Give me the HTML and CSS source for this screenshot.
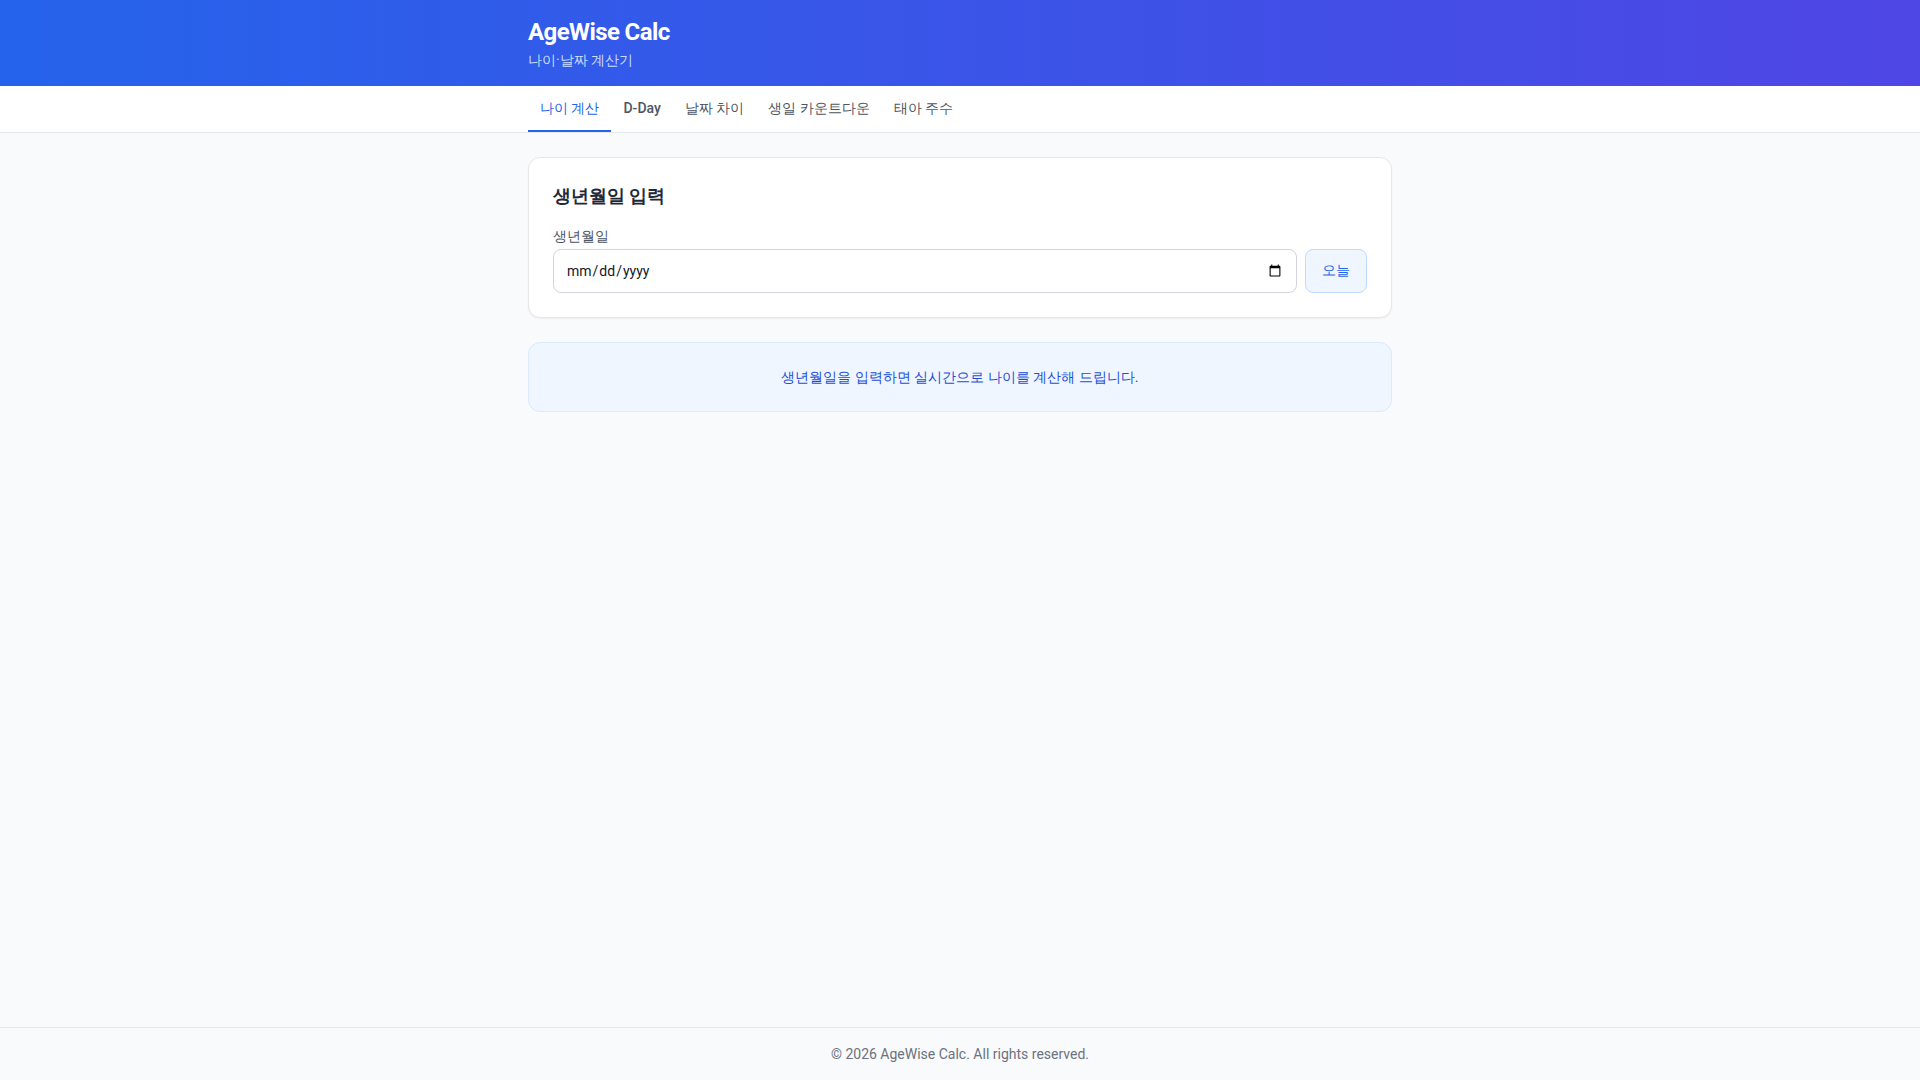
FILE: index.html
```html
<!DOCTYPE html>
<html lang="ko">
<head>
<meta charset="utf-8">
<title>AgeWise Calc</title>
<link rel="stylesheet" href="styles.css">
</head>
<body>
<header class="site-header">
  <div class="container">
    <h1 class="brand">AgeWise Calc</h1>
    <p class="tagline">나이·날짜 계산기</p>
  </div>
</header>
<nav class="tabs-bar">
  <div class="container tabs">
    <a class="tab active" href="#">나이 계산</a>
    <a class="tab" href="#">D-Day</a>
    <a class="tab" href="#">날짜 차이</a>
    <a class="tab" href="#">생일 카운트다운</a>
    <a class="tab" href="#">태아 주수</a>
  </div>
</nav>
<main class="main">
  <div class="container stack">
    <section class="card">
      <h2 class="card-title">생년월일 입력</h2>
      <label class="field-label" for="birth">생년월일</label>
      <div class="field-row">
        <input id="birth" class="date-input" type="date">
        <button class="today-btn" type="button">오늘</button>
      </div>
    </section>
    <section class="info">
      생년월일을 입력하면 실시간으로 나이를 계산해 드립니다.
    </section>
  </div>
</main>
<footer class="site-footer">
  © 2026 AgeWise Calc. All rights reserved.
</footer>
</body>
</html>
```
FILE: styles.css
```css
* { box-sizing: border-box; }
html, body { margin: 0; padding: 0; }
body {
  font-family: Roboto, sans-serif;
  background: #f9fafb;
  color: #111827;
  min-height: 100vh;
  display: flex;
  flex-direction: column;
}
.container {
  width: 864px;
  margin: 0 auto;
}
.site-header {
  background: linear-gradient(90deg, #2563eb 0%, #4f46e5 100%);
  color: #fff;
  padding: 16px 0;
}
.brand {
  margin: 0;
  font-size: 24px;
  line-height: 32px;
  font-weight: 700;
  letter-spacing: -0.025em;
}
.tagline {
  margin: 2px 0 0;
  font-size: 14px;
  line-height: 20px;
  color: rgba(219, 234, 254, 0.92);
}
.tabs-bar {
  background: #fff;
  border-bottom: 1px solid #e5e7eb;
}
.tabs {
  display: flex;
}
.tab {
  display: block;
  padding: 12px 12px;
  font-size: 14px;
  line-height: 20px;
  font-weight: 500;
  color: #4b5563;
  text-decoration: none;
  border-bottom: 2px solid transparent;
}
.tab.active {
  color: #2563eb;
  border-bottom-color: #2563eb;
}
.main {
  flex: 1;
  padding: 24px 0;
}
.stack {
  display: flex;
  flex-direction: column;
  gap: 24px;
}
.card {
  background: #fff;
  border: 1px solid #e5e7eb;
  border-radius: 12px;
  box-shadow: 0 1px 2px rgba(0, 0, 0, 0.05);
  padding: 24px;
}
.card-title {
  margin: 0 0 16px;
  font-size: 18px;
  line-height: 28px;
  font-weight: 700;
  color: #1f2937;
}
.field-label {
  display: block;
  font-size: 14px;
  line-height: 20px;
  color: #4b5563;
  margin-bottom: 3px;
}
.field-row {
  display: flex;
  gap: 8px;
}
.date-input {
  flex: 1;
  height: 44px;
  border: 1px solid #d1d5db;
  border-radius: 8px;
  padding: 0 12px;
  font-family: Roboto, sans-serif;
  font-size: 14px;
  color: #111827;
  background: #fff;
}
.today-btn {
  height: 44px;
  padding: 0 16px;
  border: 1px solid #bfdbfe;
  border-radius: 8px;
  background: #eff6ff;
  color: #2563eb;
  font-family: Roboto, sans-serif;
  font-size: 14px;
  cursor: pointer;
}
.info {
  background: #eff6ff;
  border: 1px solid #dbeafe;
  border-radius: 12px;
  padding: 24px;
  text-align: center;
  font-size: 14px;
  line-height: 20px;
  color: #1d4ed8;
}
.site-footer {
  border-top: 1px solid #e5e7eb;
  padding: 16px 0;
  text-align: center;
  font-size: 14px;
  line-height: 20px;
  color: #6b7280;
}
```
